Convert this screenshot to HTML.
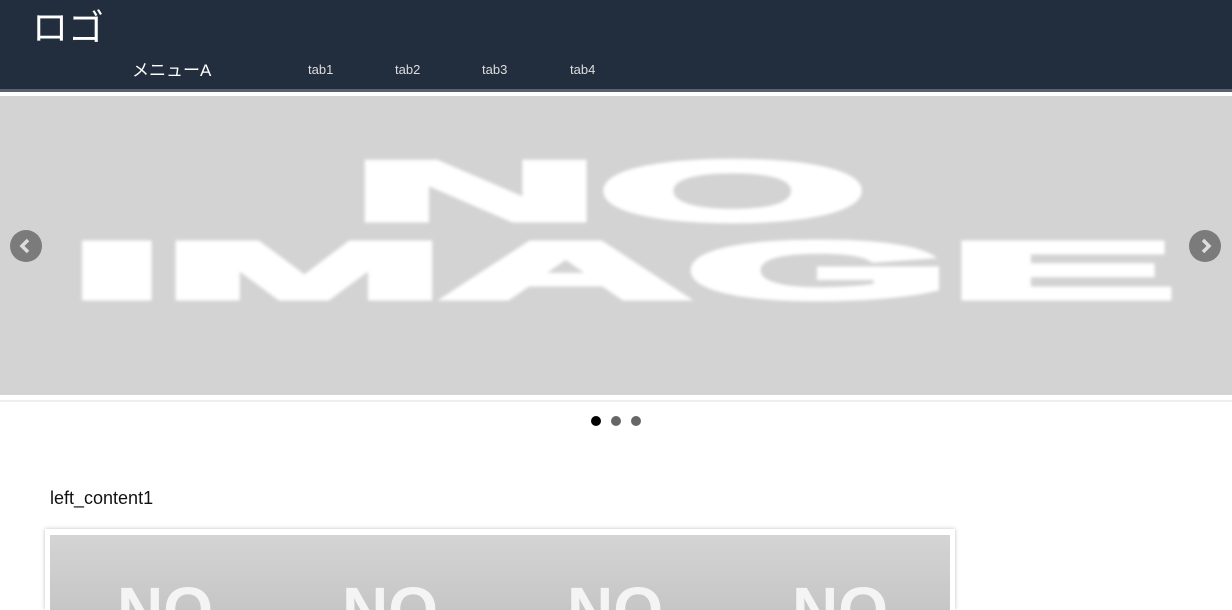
<!DOCTYPE html>
<html><head><meta charset="utf-8"><style>
*{margin:0;padding:0;box-sizing:border-box}
html,body{width:1232px;height:610px;overflow:hidden}
body{background:#fff;font-family:"Liberation Sans","Noto Sans CJK JP",sans-serif;position:relative}
.hdr{position:absolute;left:0;top:0;width:1232px;height:89px;background:#222d3e}
.logo{position:absolute;left:32px;top:-1px;color:#fff;font-size:36px}
.menu{position:absolute;left:132px;top:56px;color:#fff;font-size:17px}
.tab{position:absolute;top:62px;color:#ddd;font-size:13px}
.line{position:absolute;left:0;top:89px;width:1232px;height:3px;background:#5a6170}
.slide{position:absolute;left:0;top:96px;width:1232px;height:299px;background:#d3d3d3;overflow:hidden}
.sep{position:absolute;left:0;top:400px;width:1232px;height:2px;background:#eee}
.arr{position:absolute;top:230px;width:32px;height:32px;border-radius:50%;background:#7b7b7b}
.dot{position:absolute;top:416px;width:10px;height:10px;border-radius:50%;background:#666}
.lc{position:absolute;left:50px;top:488px;font-size:18px;color:#111}
.card{position:absolute;left:45px;top:529px;width:910px;height:81px;background:#fff;box-shadow:0 0 4px rgba(0,0,0,.25)}
.inner{position:absolute;left:50px;top:535px;width:900px;height:75px;background:linear-gradient(#d4d4d4,#c6c6c6);overflow:hidden}
.no{position:absolute;top:43px;color:#f4f4f4;font-weight:bold;font-size:64px;line-height:1}
</style></head><body>
<div class="hdr">
<div class="logo">ロゴ</div>
<div class="menu">メニューA</div>
<div class="tab" style="left:308px">tab1</div>
<div class="tab" style="left:395px">tab2</div>
<div class="tab" style="left:482px">tab3</div>
<div class="tab" style="left:570px">tab4</div>
</div>
<div class="line"></div>
<div class="slide">
<svg width="1232" height="299" style="position:absolute;left:0;top:0">
<defs><filter id="b"><feGaussianBlur stdDeviation="1.5"/></filter></defs>
<g fill="#fff" stroke="#fff" stroke-width="5" font-family="Liberation Sans" font-weight="bold" filter="url(#b)">
<text x="352" y="124" font-size="84" textLength="514" lengthAdjust="spacingAndGlyphs">NO</text>
<text x="70" y="202" font-size="80" textLength="1104" lengthAdjust="spacingAndGlyphs">IMAGE</text>
</g>
</svg>
</div>
<div class="arr" style="left:10px"><svg width="32" height="32"><path d="M18 10 L12 16 L18 22" stroke="#ddd" stroke-width="3.5" fill="none"/></svg></div>
<div class="arr" style="left:1189px"><svg width="32" height="32"><path d="M14 10 L20 16 L14 22" stroke="#ddd" stroke-width="3.5" fill="none"/></svg></div>
<div class="sep"></div>
<div class="dot" style="left:591px;background:#000"></div>
<div class="dot" style="left:611px"></div>
<div class="dot" style="left:631px"></div>
<div class="lc">left_content1</div>
<div class="card"></div>
<div class="inner">
<div class="no" style="left:67px">NO</div>
<div class="no" style="left:292px">NO</div>
<div class="no" style="left:517px">NO</div>
<div class="no" style="left:742px">NO</div>
</div>
</body></html>
